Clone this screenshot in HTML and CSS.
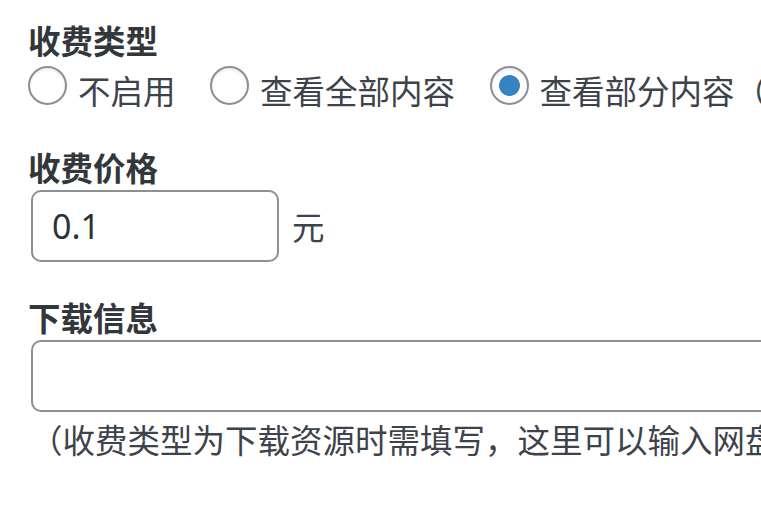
FILE: index.html
```html
<!DOCTYPE html>
<html lang="zh-CN">
<head>
<meta charset="utf-8">
<title>收费设置</title>
<link rel="stylesheet" href="styles.css">
</head>
<body>
<div class="panel">
  <div class="field">
    <h3 class="label">收费类型</h3>
    <div class="radios">
      <label class="choice"><input type="radio" name="pay" class="radio"><span class="choice-text">不启用</span></label>
      <label class="choice"><input type="radio" name="pay" class="radio"><span class="choice-text">查看全部内容</span></label>
      <label class="choice"><input type="radio" name="pay" class="radio" checked><span class="choice-text">查看部分内容（</span></label>
    </div>
  </div>
  <div class="field field-price">
    <h3 class="label">收费价格</h3>
    <div class="price-row">
      <input type="text" class="input input-price" value="0.1">
      <span class="unit">元</span>
    </div>
  </div>
  <div class="field field-download">
    <h3 class="label">下载信息</h3>
    <input type="text" class="input input-wide" value="">
    <p class="hint">（收费类型为下载资源时需填写，这里可以输入网盘</p>
  </div>
</div>
</body>
</html>
```

FILE: styles.css
```css
html, body {
  margin: 0;
  padding: 0;
  background: #ffffff;
  overflow: hidden;
}

body {
  width: 761px;
  height: 518px;
  font-family: "Noto Sans CJK SC", "Noto Sans", sans-serif;
  font-size: 32.5px;
  color: #3c434a;
}

.panel {
  padding: 20px 0 0 28px;
  white-space: nowrap;
}

.label {
  margin: 0;
  font-size: 32.5px;
  line-height: 40px;
  font-weight: 700;
  color: #32373c;
}

.radios {
  display: flex;
  gap: 34.5px;
  margin-top: 6px;
}

.choice {
  display: flex;
  align-items: flex-start;
  flex: none;
}

.radio {
  appearance: none;
  -webkit-appearance: none;
  box-sizing: border-box;
  width: 39px;
  height: 39px;
  margin: 0 11px 0 0;
  border: 2.4px solid #8c8f94;
  border-radius: 50%;
  background: #fff;
  box-shadow: inset 0 2px 3px rgba(0, 0, 0, 0.08);
  flex: none;
}

.radio:checked {
  background: radial-gradient(circle, #3582c4 0 10px, #ffffff 10.8px);
}

.choice-text {
  margin-top: 4px;
  line-height: 40px;
  flex: none;
}

.field-price {
  margin-top: 37px;
}

.field-download {
  margin-top: 35px;
}

.price-row {
  display: flex;
  align-items: center;
  margin-top: 3px;
  margin-left: 3px;
}

.input {
  box-sizing: border-box;
  height: 72px;
  border: 2.4px solid #8c8f94;
  border-radius: 10px;
  padding: 0 19px;
  font-family: "Noto Sans", "Noto Sans CJK SC", sans-serif;
  font-size: 34px;
  color: #2c3338;
  background: #fff;
  outline: none;
}

.input-price {
  width: 248px;
}

.unit {
  margin-left: 13px;
  line-height: 40px;
}

.input-wide {
  display: block;
  width: 900px;
  margin: 3px 0 0 3px;
}

.hint {
  margin: 7px 0 0 2px;
  line-height: 40px;
}
```
